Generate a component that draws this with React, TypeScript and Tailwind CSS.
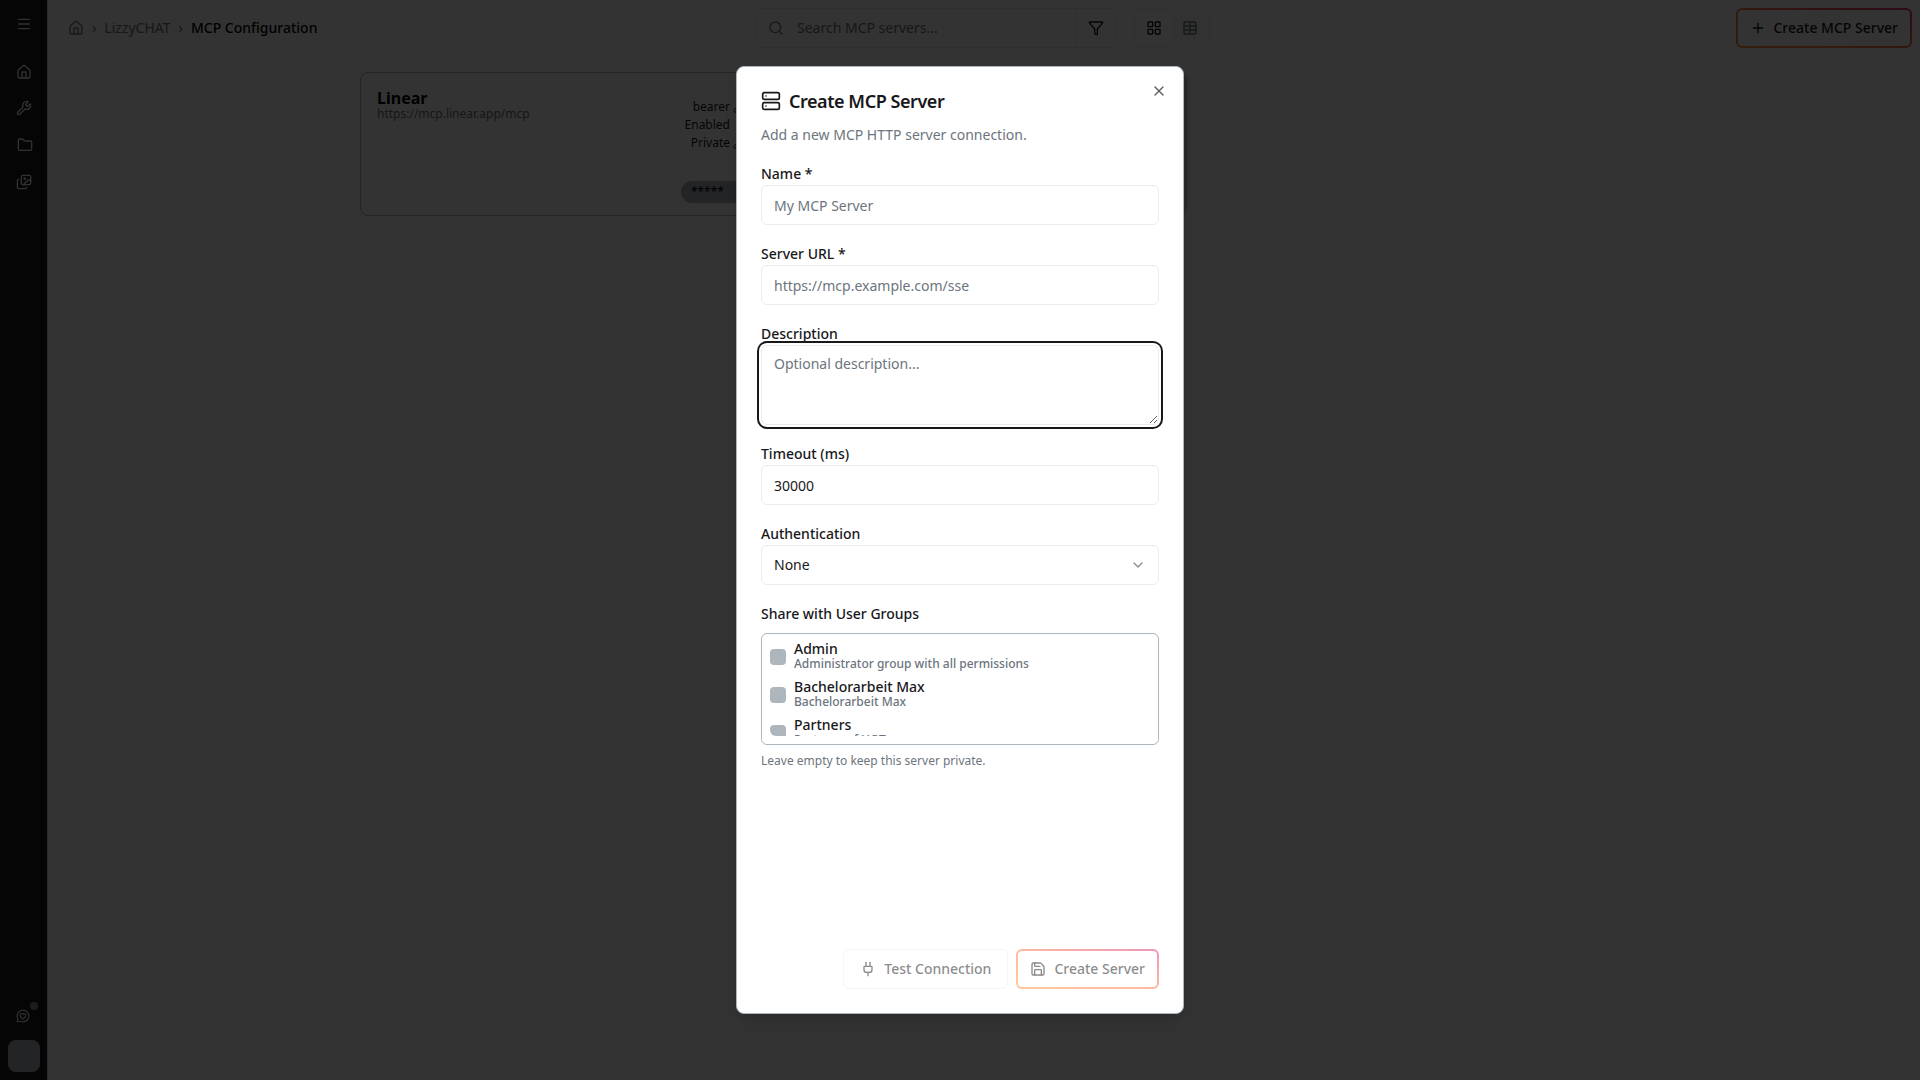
import React from 'react';
import {
  Menu, House, Wrench, Folder, Images, MessageCircleHeart, Search, Funnel, LayoutGrid,
  Table, Plus, Server, X, ChevronDown, Plug, Save, KeyRound,
} from 'lucide-react';

const control =
  'block w-full rounded-md border border-[#e9ecef] bg-white px-3 text-sm outline-none placeholder:text-[#6c757d]';

const gradientButton =
  'flex h-10 items-center rounded-md border-2 border-transparent px-3 text-sm font-medium whitespace-nowrap [background:linear-gradient(white,white)_padding-box,linear-gradient(to_top_right,#ff9340,#ff7a45_45%,#e0306f)_border-box]';

const groups = [
  { name: 'Admin', note: 'Administrator group with all permissions' },
  { name: 'Bachelorarbeit Max', note: 'Bachelorarbeit Max' },
  { name: 'Partners', note: 'Partners of HOT' },
];

function Field({ label, children }: { label: string; children: React.ReactNode }) {
  return (
    <label className="flex flex-col">
      <span className="mb-px h-5 text-sm leading-5 font-medium">{label}</span>
      {children}
    </label>
  );
}

function Sidebar() {
  return (
    <aside className="flex h-full w-12 shrink-0 flex-col items-center border-r border-[#ced4da] bg-[#19191c] text-[#f1f3f5]">
      <Menu size={16} className="mt-4 ml-px" />
      <House size={16} className="mt-8 ml-px" />
      <Wrench size={16} className="mt-5 ml-px" />
      <Folder size={16} className="mt-[21px] ml-[3px]" />
      <Images size={16} className="mt-[21px] ml-px" />
      <div className="relative mt-auto mr-px mb-[17px]">
        <MessageCircleHeart size={14} />
        <span className="absolute -top-[7px] -right-2 size-2 rounded-full bg-[#868e96]" />
      </div>
      <div className="mb-2 ml-px size-8 rounded-lg bg-[#adb5bd]" />
    </aside>
  );
}

function TopBar() {
  return (
    <header className="grid h-14 shrink-0 grid-cols-[1fr_456px_1fr] items-center pr-2 pl-5">
      <nav className="flex items-center text-sm text-[#6c757d]">
        <House size={16} />
        <span className="mx-2">›</span>
        <span>LizzyCHAT</span>
        <span className="mx-2">›</span>
        <span className="font-medium text-black">MCP Configuration</span>
      </nav>
      <div className="-ml-1.5 flex items-center">
        <div className="flex h-10 w-[360px] items-center rounded-md border border-[#e9ecef]">
          <div className="flex h-full w-[320px] items-center gap-[13px] border-r border-[#e9ecef] pl-[11px] text-sm text-[#6c757d]">
            <Search size={16} />
            Search MCP servers...
          </div>
          <Funnel size={16} className="ml-[11px]" />
        </div>
        <div className="ml-4 flex h-10 items-center rounded-md bg-[#fafafa] p-1">
          <div className="flex h-8 w-9 items-center justify-center rounded-sm bg-white"><LayoutGrid size={16} /></div>
          <div className="flex h-8 w-9 items-center justify-center text-[#6c757d]"><Table size={16} /></div>
        </div>
      </div>
      <button className={`${gradientButton} gap-[7px] justify-self-end`}>
        <Plus size={16} />
        Create MCP Server
      </button>
    </header>
  );
}

function ServerCard() {
  return (
    <article className="mt-4 ml-[312px] flex h-36 w-[827px] justify-between overflow-hidden rounded-lg border border-[#adb5bd] bg-white">
      <div className="w-[304px] pt-4 pl-4">
        <h3 className="h-[18px] leading-[18px] font-bold text-black">Linear</h3>
        <p className="text-xs leading-[14px] text-[#6c757d]">https://mcp.linear.app/mcp</p>
      </div>
      <div className="flex flex-1 flex-col text-xs leading-[18px]">
        <div className="mt-[25px] flex items-center gap-[3px]"><span className="w-[65px] text-right">bearer</span><KeyRound size={12} /></div>
        <div className="w-[65px] text-right">Enabled</div>
        <div className="flex items-center gap-[3px]"><span className="w-[65px] text-right">Private</span><KeyRound size={12} /></div>
        <div className="mt-[29px] ml-4 h-[22px] w-[120px] rounded-full bg-[#adb5bd] pl-2.5 leading-[22px] font-semibold">*****</div>
      </div>
      <div className="w-4 bg-[#d3dce1]" />
    </article>
  );
}

function GroupPicker() {
  return (
    <div className="h-28 rounded-md border border-[#adb5bd] p-2">
      <div className="h-full overflow-hidden rounded-md">
        {groups.map((group) => (
          <div key={group.name} className="mb-2 flex h-[30px] items-center gap-2">
            <span className="size-4 rounded-sm bg-[#adb5bd]" />
            <div className="font-medium">
              <div className="text-sm leading-[14px]">{group.name}</div>
              <div className="text-xs leading-4 text-[#6c757d]">{group.note}</div>
            </div>
          </div>
        ))}
      </div>
    </div>
  );
}

function CreateServerDialog() {
  return (
    <section
      role="dialog"
      className="relative flex h-[948px] w-[448px] flex-col rounded-lg border border-[#adb5bd] bg-white px-6 pb-6 shadow-lg"
    >
      <X size={16} className="absolute top-4 right-4 opacity-70" />
      <h2 className="mt-6 flex h-5 items-center gap-2 text-lg font-semibold tracking-tight">
        <Server size={20} />
        Create MCP Server
      </h2>
      <p className="mt-3.5 text-sm text-[#6c757d]">Add a new MCP HTTP server connection.</p>
      <form className="mt-[19px] flex flex-col gap-[19px]">
        <Field label="Name *">
          <input className={`${control} h-10`} placeholder="My MCP Server" />
        </Field>
        <Field label="Server URL *">
          <input className={`${control} h-10`} placeholder="https://mcp.example.com/sse" />
        </Field>
        <Field label="Description">
          <textarea
            className={`${control} h-20 py-2 ring-2 ring-[#18181b] ring-offset-2`}
            placeholder="Optional description..."
          />
        </Field>
        <Field label="Timeout (ms)">
          <input className={`${control} h-10`} defaultValue="30000" />
        </Field>
        <Field label="Authentication">
          <div className="flex h-10 items-center justify-between rounded-md border border-[#e9ecef] px-3 text-sm">
            None
            <ChevronDown size={16} className="opacity-50" />
          </div>
        </Field>
        <div>
          <div className="mb-[9px] h-5 text-sm font-medium">Share with User Groups</div>
          <GroupPicker />
          <p className="mt-2 text-xs text-[#6c757d]">Leave empty to keep this server private.</p>
        </div>
      </form>
      <div className="mt-auto flex justify-end gap-2 opacity-50">
        <button className="flex h-10 items-center gap-2 rounded-md border border-[#e9ecef] px-4 text-sm font-medium whitespace-nowrap">
          <Plug size={16} />
          Test Connection
        </button>
        <button className={`${gradientButton} gap-2`}>
          <Save size={16} />
          Create Server
        </button>
      </div>
    </section>
  );
}

export default function App() {
  return (
    <div className="relative flex h-[1080px] w-[1920px] overflow-hidden bg-white font-['Noto_Sans',sans-serif] text-[#18181b]">
      <Sidebar />
      <main className="flex min-w-0 flex-1 flex-col">
        <TopBar />
        <ServerCard />
      </main>
      <div className="absolute inset-0 flex items-center justify-center bg-black/80">
        <CreateServerDialog />
      </div>
    </div>
  );
}
